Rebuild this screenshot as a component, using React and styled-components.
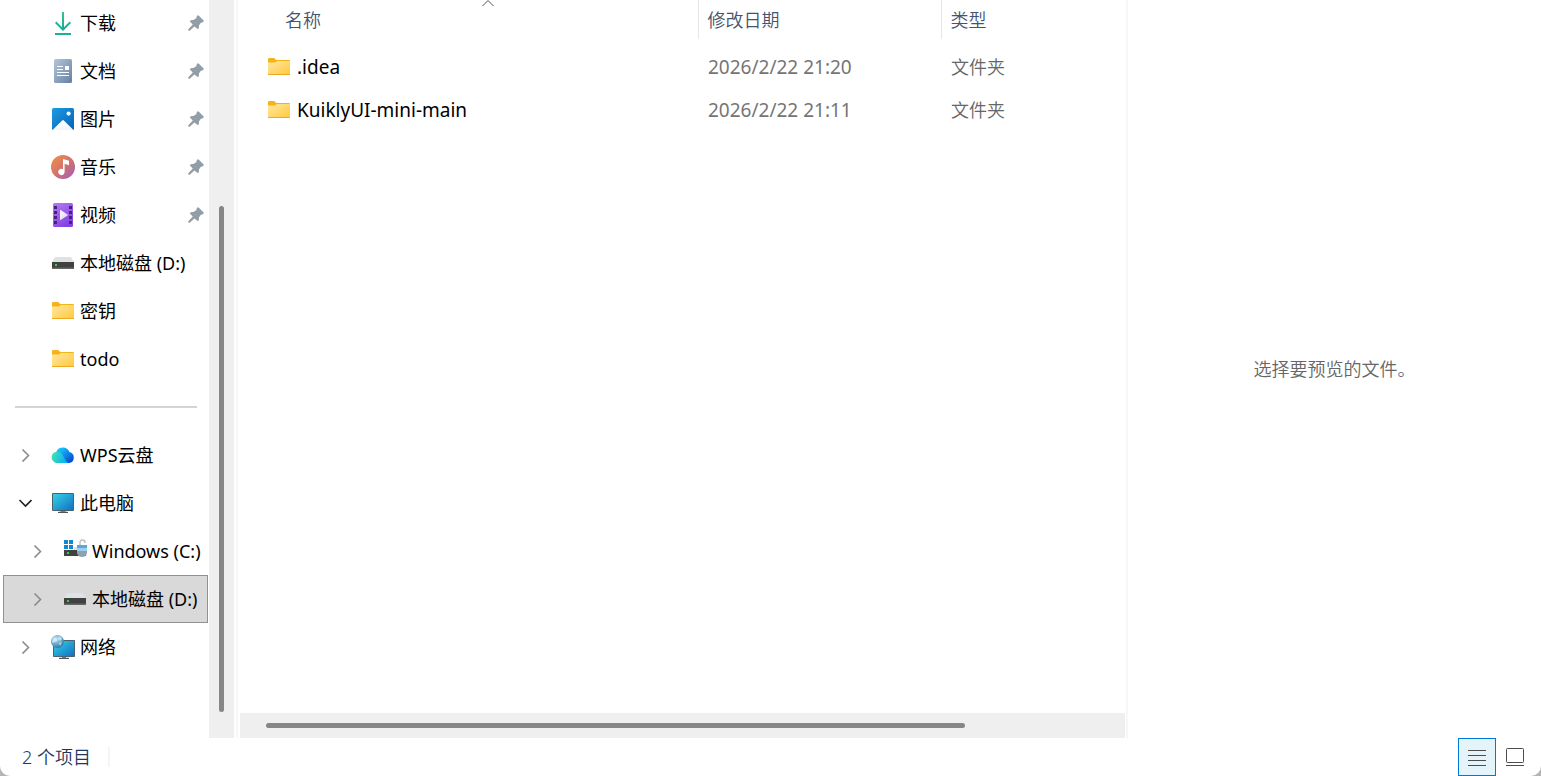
import React, { useState } from "react";
import styled, { createGlobalStyle } from "styled-components";

const GlobalStyle = createGlobalStyle`
	* {
		box-sizing: border-box;
	}

	body {
		margin: 0;
		background: #b4b4b4;
		color: #000;
		font-family: "Noto Sans", "Noto Sans CJK SC", sans-serif;
		font-size: 18px;
		font-weight: 350;
		line-height: 24px;
	}

	button {
		margin: 0;
		padding: 0;
		border: 0;
		background: none;
		color: inherit;
		font: inherit;
		text-align: left;
	}
`;

const places = [
	{ name: "下载", icon: DownloadIcon, pinned: true },
	{ name: "文档", icon: DocumentIcon, pinned: true },
	{ name: "图片", icon: PictureIcon, pinned: true },
	{ name: "音乐", icon: MusicIcon, pinned: true },
	{ name: "视频", icon: VideoIcon, pinned: true },
	{ name: "本地磁盘 (D:)", icon: DriveIcon },
	{ name: "密钥", icon: FolderIcon },
	{ name: "todo", icon: FolderIcon },
];

const devices = [
	{ name: "WPS云盘", icon: CloudIcon, arrow: "closed" },
	{ name: "此电脑", icon: ComputerIcon, arrow: "open" },
	{ name: "Windows (C:)", icon: SystemDriveIcon, arrow: "closed", nested: true },
	{ name: "本地磁盘 (D:)", icon: DriveIcon, arrow: "closed", nested: true, id: "D" },
	{ name: "网络", icon: NetworkIcon, arrow: "closed" },
];

const files = [
	{ name: ".idea", date: "2026/2/22 21:20", type: "文件夹" },
	{ name: "KuiklyUI-mini-main", date: "2026/2/22 21:11", type: "文件夹" },
];

function DownloadIcon() {
	return (
		<Icon viewBox="0 0 24 24">
			<defs>
				<linearGradient id="down" x1="0" y1="0" x2="0" y2="1">
					<stop offset="0" stopColor="#33c58b" />
					<stop offset="1" stopColor="#0fa99b" />
				</linearGradient>
			</defs>
			<path
				d="M11 1h2v15.2l5.6-5.6 1.4 1.4-8 8-8-8 1.4-1.4 5.6 5.6z"
				fill="url(#down)"
			/>
			<path d="M4 22h16v2H4z" fill="#1bb193" />
		</Icon>
	);
}

function DocumentIcon() {
	return (
		<Icon viewBox="0 0 24 24">
			<defs>
				<linearGradient id="doc" x1="0" y1="0" x2="1" y2="1">
					<stop offset="0" stopColor="#b4c6da" />
					<stop offset="1" stopColor="#6680a3" />
				</linearGradient>
			</defs>
			<rect x="3" y="0" width="18" height="24" rx="1.5" fill="url(#doc)" />
			<path d="M6 7h6v1H6zM6 10h6v1H6zM6 13h12v1H6zM6 16h12v1H6zM14 7h4v4h-4z" fill="#fff" />
		</Icon>
	);
}

function PictureIcon() {
	return (
		<Icon viewBox="0 0 24 24">
			<defs>
				<linearGradient id="pic" x1="0" y1="0" x2="1" y2="1">
					<stop offset="0" stopColor="#1b9de2" />
					<stop offset="1" stopColor="#0a5fb4" />
				</linearGradient>
				<linearGradient id="hill" x1="0" y1="0" x2="0" y2="1">
					<stop offset="0" stopColor="#fff" />
					<stop offset="1" stopColor="#eef5fc" />
				</linearGradient>
			</defs>
			<rect x="1" y="1" width="22" height="22" rx="1.5" fill="url(#pic)" />
			<path d="M2 22.4l9.2-9q.8-.8 1.6 0l9.2 9q-.4.6-1 .6H3q-.6 0-1-.6z" fill="url(#hill)" />
			<circle cx="17.6" cy="6.6" r="2.1" fill="#f1f8fe" />
		</Icon>
	);
}

function MusicIcon() {
	return (
		<Icon viewBox="0 0 24 24">
			<defs>
				<linearGradient id="music" x1="0.1" y1="0.1" x2="0.9" y2="0.9">
					<stop offset="0" stopColor="#f08c4c" />
					<stop offset="0.55" stopColor="#d0706f" />
					<stop offset="1" stopColor="#a760b4" />
				</linearGradient>
			</defs>
			<circle cx="12" cy="12" r="12" fill="url(#music)" />
			<path d="M12 4l6 1.8v4.4l-4.4-1.4V17a3.2 3.2 0 1 1-1.6-2.8z" fill="#fff" />
		</Icon>
	);
}

function VideoIcon() {
	return (
		<Icon viewBox="0 0 24 24">
			<defs>
				<linearGradient id="video" x1="0" y1="0" x2="0.6" y2="1">
					<stop offset="0" stopColor="#b57bf5" />
					<stop offset="1" stopColor="#8442e0" />
				</linearGradient>
				<linearGradient id="play" x1="0" y1="0" x2="1" y2="1">
					<stop offset="0" stopColor="#fff" />
					<stop offset="1" stopColor="#dccbf4" />
				</linearGradient>
			</defs>
			<rect x="2" y="0" width="20" height="24" rx="1.5" fill="url(#video)" />
			<path
				d="M3 3h3v3H3zM3 8h3v3H3zM3 13h3v3H3zM3 18h3v3H3zM18 3h3v3h-3zM18 8h3v3h-3zM18 13h3v3h-3zM18 18h3v3h-3z"
				fill="#452180"
			/>
			<path d="M9 7.4q0-.7.7-.4l6.8 4.5q.6.5 0 1l-6.8 4.4q-.7.4-.7-.4z" fill="url(#play)" />
		</Icon>
	);
}

function DriveIcon() {
	return (
		<Icon viewBox="0 0 24 24">
			<path d="M5.2 6h13.6q1 0 1.6.8L23 11H1l2.6-4.2Q4.2 6 5.2 6z" fill="#dfe1e4" />
			<rect x="1" y="11" width="22" height="7" rx="0.6" fill="#666" />
			<rect x="1" y="11" width="22" height="5.5" fill="#414141" />
			<rect x="4" y="13" width="2" height="2" fill="#22dd3a" />
		</Icon>
	);
}

function FolderIcon() {
	return (
		<Icon viewBox="0 0 24 24">
			<defs>
				<linearGradient id="folder" x1="0" y1="0" x2="1" y2="1">
					<stop offset="0" stopColor="#ffe8a4" />
					<stop offset="1" stopColor="#ffc83a" />
				</linearGradient>
			</defs>
			<path d="M1 4.2Q1 3 2.2 3h5l2 2H22q1 0 1 1v3H1z" fill="#f5b316" />
			<path d="M1 7.5h7L10 6h12.5q.5 0 .5.5V19q0 1-1 1H2q-1 0-1-1z" fill="url(#folder)" />
			<path d="M1 19h22q0 1-1 1H2q-1 0-1-1z" fill="#eba923" />
		</Icon>
	);
}

function CloudIcon() {
	return (
		<Icon viewBox="0 0 24 24">
			<defs>
				<linearGradient id="cloudBack" x1="0" y1="0" x2="1" y2="1">
					<stop offset="0.2" stopColor="#16bdfd" />
					<stop offset="0.9" stopColor="#0648cf" />
				</linearGradient>
				<linearGradient id="cloudFront" x1="0" y1="0" x2="1" y2="0.3">
					<stop offset="0" stopColor="#45e8a9" />
					<stop offset="1" stopColor="#08b0f5" />
				</linearGradient>
			</defs>
			<path d="M5 10a7 7 0 0 1 13.4-1A5.6 5.6 0 0 1 18 20H8z" fill="url(#cloudBack)" />
			<path d="M6.5 20a5.7 5.7 0 1 1 4-9.6c2.5 2.6 3 6.6 7 9.6z" fill="url(#cloudFront)" />
		</Icon>
	);
}

function ComputerIcon() {
	return (
		<Icon viewBox="0 0 24 24">
			<defs>
				<linearGradient id="screen" x1="0" y1="0" x2="1" y2="1">
					<stop offset="0" stopColor="#34d3e4" />
					<stop offset="1" stopColor="#1270c4" />
				</linearGradient>
			</defs>
			<rect x="1" y="2" width="22" height="18" rx="1" fill="#48626f" />
			<rect x="2" y="3" width="20" height="16" fill="url(#screen)" />
			<path d="M9.5 20h5v1h-5z" fill="#7c868c" />
			<path d="M7 20.8h10V22H7z" fill="#4b555b" />
		</Icon>
	);
}

function SystemDriveIcon() {
	return (
		<Icon viewBox="0 0 24 24">
			<path d="M1 1h4v4H1zM6 1h4v4H6zM1 6h4v4H1zM6 6h4v4H6z" fill="#0e88d2" />
			<path d="M11 8h9l3 3H11z" fill="#dfe1e4" />
			<rect x="1" y="11" width="22" height="6" fill="#414141" />
			<rect x="4" y="13" width="2" height="2" fill="#22dd3a" />
			<path d="M17 7V3.5a2.5 2.5 0 0 1 5 0V4" fill="none" stroke="#b9bfc5" strokeWidth="1.4" />
			<path d="M14 6h10v3H14z" fill="#5ba7dd" />
			<path d="M14 9h10v3H14z" fill="#9bd0f2" />
			<path d="M14 12h10v2q-1 4-5 4t-5-4z" fill="#8fa0ae" />
		</Icon>
	);
}

function NetworkIcon() {
	return (
		<Icon viewBox="0 0 24 24">
			<defs>
				<linearGradient id="netScreen" x1="0" y1="0" x2="1" y2="1">
					<stop offset="0" stopColor="#34d3e4" />
					<stop offset="1" stopColor="#1270c4" />
				</linearGradient>
				<radialGradient id="globe" cx="0.4" cy="0.3" r="0.7">
					<stop offset="0" stopColor="#bfe4f5" />
					<stop offset="1" stopColor="#2c7aa9" />
				</radialGradient>
			</defs>
			<rect x="2" y="5" width="22" height="17" rx="0.8" fill="#48626f" />
			<rect x="3" y="6" width="20" height="15" fill="url(#netScreen)" />
			<path d="M11 22h4v1h-4z" fill="#7c868c" />
			<path d="M8 22.8h10V24H8z" fill="#4b555b" />
			<circle cx="6.5" cy="6.5" r="6.5" fill="url(#globe)" />
			<path d="M2 3q3-1 4 1T4 7 3 10 1 7zM8 1l3 2-1 3-3-2zM8 8l3-1-2 4z" fill="#e4f3fa" opacity="0.7" />
		</Icon>
	);
}

function PinIcon() {
	return (
		<Pin viewBox="0 0 16 16" aria-label="已固定">
			<path
				d="M10.6.4l5 5q.6 1.8-1.6 2.1l-1.400.4-1.600 2.700q.2 2.400-1 3.600L6.400 11.400 1.700 15.700H.3V14.300L4.800 9.600 1.600 6.200Q3 4.900 5.400 5.100L8.300 3.200l.3-1.400Q9-.1 10.600.4z"
				fill="#929da5"
			/>
		</Pin>
	);
}

function Chevron({ open }) {
	return (
		<svg width="14" height="14" viewBox="0 0 14 14" fill="none">
			{open ? (
				<path d="M1.5 4l6 6 6-6" stroke="#222" strokeWidth="1.6" />
			) : (
				<path d="M4.5 1.5l6 6-6 6" stroke="#8b8b8b" strokeWidth="1.6" />
			)}
		</svg>
	);
}

function TreeItem({ item, selected, onSelect }) {
	const ItemIcon = item.icon;
	return (
		<TreeRow $nested={item.nested} $selected={selected}>
			<Toggle as={item.arrow ? "button" : "span"} aria-label={item.arrow && "展开"}>
				{item.arrow && <Chevron open={item.arrow === "open"} />}
			</Toggle>
			<TreeLabel onClick={onSelect}>
				<ItemIcon />
				{item.name}
			</TreeLabel>
			{item.pinned && <PinIcon />}
		</TreeRow>
	);
}

function App() {
	const [current, setCurrent] = useState("D");
	const [view, setView] = useState("details");

	return (
		<Window>
			<GlobalStyle />
			<Body>
				<Sidebar>
					<Tree>
						{places.map((item) => (
							<TreeItem
								key={item.name}
								item={item}
								selected={current === item.name}
								onSelect={() => setCurrent(item.name)}
							/>
						))}
						<Divider />
						{devices.map((item) => (
							<TreeItem
								key={item.name}
								item={item}
								selected={current === (item.id || item.name)}
								onSelect={() => setCurrent(item.id || item.name)}
							/>
						))}
					</Tree>
					<VerticalBar>
						<VerticalThumb />
					</VerticalBar>
				</Sidebar>
				<Content>
					<FileTable>
						<thead>
							<tr>
								<NameHeader>
									<button>名称</button>
									<SortMark viewBox="0 0 12 7">
										<path d="M.5 6L6 .5 11.5 6" fill="none" stroke="#555" />
									</SortMark>
								</NameHeader>
								<DateHeader>
									<button>修改日期</button>
								</DateHeader>
								<Header>
									<button>类型</button>
								</Header>
							</tr>
						</thead>
						<tbody>
							{files.map((file) => (
								<tr key={file.name}>
									<NameCell>
										<FileName>
											<FolderIcon />
											{file.name}
										</FileName>
									</NameCell>
									<DateCell>{file.date}</DateCell>
									<Cell>{file.type}</Cell>
								</tr>
							))}
						</tbody>
					</FileTable>
					<HorizontalBar>
						<HorizontalThumb />
					</HorizontalBar>
				</Content>
				<Preview>选择要预览的文件。</Preview>
			</Body>
			<StatusBar>
				<Count>2 个项目</Count>
				<ViewButton
					aria-label="详细信息"
					$active={view === "details"}
					onClick={() => setView("details")}
				>
					<svg width="18" height="18" viewBox="0 0 18 18">
						<path d="M0 2.5h18M0 7.5h18M0 12.5h18M0 17.5h18" stroke="#4d4d4d" />
					</svg>
				</ViewButton>
				<ViewButton
					aria-label="大缩略图"
					$active={view === "large"}
					onClick={() => setView("large")}
				>
					<svg width="18" height="18" viewBox="0 0 18 18">
						<rect x="0.5" y="0.5" width="17" height="14" rx="0.8" fill="none" stroke="#4d4d4d" />
						<path d="M0 17.5h18" stroke="#4d4d4d" />
					</svg>
				</ViewButton>
			</StatusBar>
		</Window>
	);
}

const Window = styled.div`
	min-height: 100vh;
	display: flex;
	flex-direction: column;
	background: #fff;
	border-radius: 0 0 10px 10px;
	overflow: hidden;
`;

const Body = styled.div`
	flex: 1;
	display: grid;
	grid-template-columns: 238px minmax(0, 1fr) 413px;
`;

const Sidebar = styled.nav`
	display: flex;
	border-right: 2px solid #f7f7f7;
`;

const Tree = styled.ul`
	flex: 1;
	min-width: 0;
	margin: -1px 0 0;
	padding: 0 1px 0 3px;
	font-weight: 400;
	list-style: none;
`;

const TreeRow = styled.li`
	display: flex;
	align-items: center;
	height: 48px;
	padding-left: ${(props) => (props.$nested ? "27px" : "15px")};
	padding-right: 4px;
	background: ${(props) => (props.$selected ? "#d9d9d9" : "transparent")};
	box-shadow: ${(props) => (props.$selected ? "inset 0 0 0 1px #919191" : "none")};
`;

const Toggle = styled.button`
	display: flex;
	flex: none;
	width: 33px;
`;

const TreeLabel = styled.button`
	display: flex;
	flex: 1;
	align-items: center;
	gap: 5px;
	min-width: 0;
	white-space: nowrap;
`;

const Icon = styled.svg`
	flex: none;
	width: 24px;
	height: 24px;
`;

const Pin = styled.svg`
	flex: none;
	width: 16px;
	height: 16px;
`;

const Divider = styled.li`
	height: 48px;
	padding: 23px 11px 23px 12px;

	&::before {
		content: "";
		display: block;
		height: 2px;
		background: #d4d4d4;
	}
`;

const VerticalBar = styled.div`
	flex: none;
	display: flex;
	width: 25px;
	margin-right: 2px;
	padding: 206px 10px 26px;
	background: #efefef;
`;

const VerticalThumb = styled.div`
	flex: 1;
	border-radius: 3px;
	background: #868686;
`;

const Content = styled.main`
	display: flex;
	flex-direction: column;
	justify-content: space-between;
	padding: 0 1px 0 2px;
	border-right: 2px solid #f7f7f7;
`;

const FileTable = styled.table`
	width: 100%;
	table-layout: fixed;
	border-collapse: collapse;
`;

const Header = styled.th`
	height: 39px;
	padding: 0 0 0 9px;
	color: #44546f;
	font-weight: inherit;
	text-align: left;
`;

const NameHeader = styled(Header)`
	position: relative;
	width: 458px;
	padding-left: 45px;
	border-right: 1px solid #e5e5e5;
`;

const DateHeader = styled(Header)`
	width: 243px;
	border-right: 1px solid #e5e5e5;
`;

const SortMark = styled.svg`
	position: absolute;
	top: 0;
	right: 204px;
	width: 12px;
	height: 7px;
`;

const Cell = styled.td`
	height: 43px;
	padding: 0 0 0 10px;
	color: #666;

	tr:first-child > & {
		height: 49px;
		padding-top: 6px;
	}
`;

const DateCell = styled(Cell)`
	color: #757575;
	font-size: 19px;
	font-weight: 400;
`;

const NameCell = styled(Cell)`
	padding-left: 27px;
	color: #000;
	font-size: 19px;
	font-weight: 400;
`;

const FileName = styled.div`
	display: flex;
	align-items: center;
	gap: 6px;
`;

const HorizontalBar = styled.div`
	height: 25px;
	padding: 10px 160px 10px 26px;
	background: #efefef;
`;

const HorizontalThumb = styled.div`
	height: 5px;
	border-radius: 3px;
	background: #868686;
`;

const Preview = styled.aside`
	display: flex;
	align-items: center;
	justify-content: center;
	color: #666;
`;

const StatusBar = styled.footer`
	display: flex;
	align-items: center;
	height: 38px;
	padding: 0 7px 0 22px;
	color: #1e395b;
`;

const Count = styled.div`
	margin-right: auto;
	padding-right: 17px;
	border-right: 2px solid #f5f5f5;
	line-height: 20px;
`;

const ViewButton = styled.button`
	display: flex;
	align-items: center;
	justify-content: center;
	width: 38px;
	height: 38px;
	border: 1px solid ${(props) => (props.$active ? "#0078d7" : "transparent")};
	background: ${(props) => (props.$active ? "#e5f3fb" : "transparent")};
`;

export default App;
